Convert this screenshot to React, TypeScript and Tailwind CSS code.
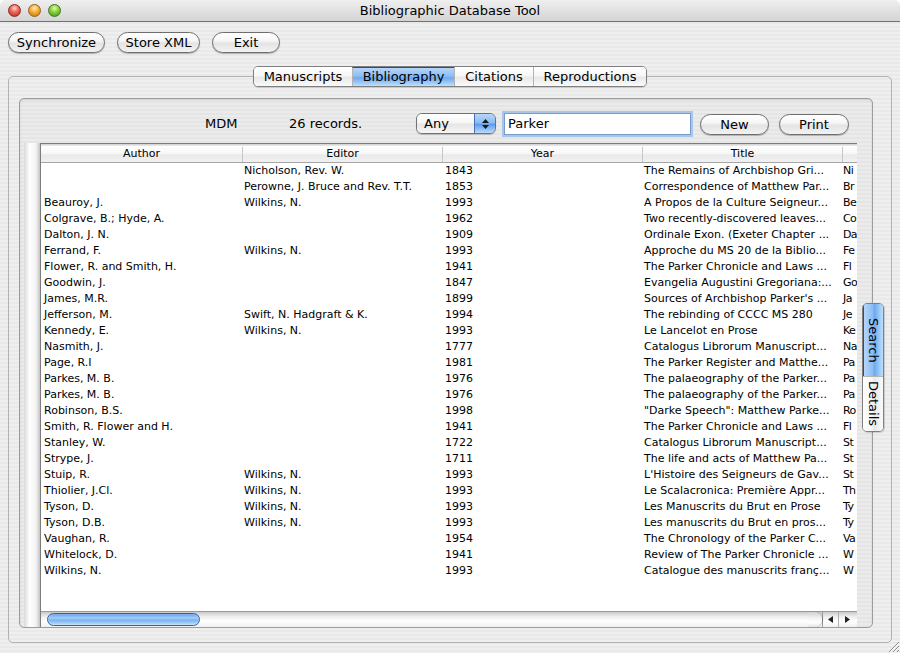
import React from "react";

type Row = {
  author: string;
  editor: string;
  year: string;
  title: string;
  cite: string;
};

// last column is only partly visible in the window, so keep just its first letters
const rows: Row[] = [
  { author: "", editor: "Nicholson, Rev. W.", year: "1843", title: "The Remains of Archbishop Gri...", cite: "Ni" },
  { author: "", editor: "Perowne, J. Bruce and Rev. T.T.", year: "1853", title: "Correspondence of Matthew Par...", cite: "Br" },
  { author: "Beauroy, J.", editor: "Wilkins, N.", year: "1993", title: "A Propos de la Culture Seigneur...", cite: "Be" },
  { author: "Colgrave, B.; Hyde, A.", editor: "", year: "1962", title: "Two recently-discovered leaves...", cite: "Co" },
  { author: "Dalton, J. N.", editor: "", year: "1909", title: "Ordinale Exon. (Exeter Chapter ...", cite: "Da" },
  { author: "Ferrand, F.", editor: "Wilkins, N.", year: "1993", title: "Approche du MS 20 de la Biblio...", cite: "Fe" },
  { author: "Flower, R. and Smith, H.", editor: "", year: "1941", title: "The Parker Chronicle and Laws ...", cite: "Fl" },
  { author: "Goodwin, J.", editor: "", year: "1847", title: "Evangelia Augustini Gregoriana:...", cite: "Go" },
  { author: "James, M.R.", editor: "", year: "1899", title: "Sources of Archbishop Parker's ...", cite: "Ja" },
  { author: "Jefferson, M.", editor: "Swift, N. Hadgraft & K.", year: "1994", title: "The rebinding of CCCC MS 280", cite: "Je" },
  { author: "Kennedy, E.", editor: "Wilkins, N.", year: "1993", title: "Le Lancelot en Prose", cite: "Ke" },
  { author: "Nasmith, J.", editor: "", year: "1777", title: "Catalogus Librorum Manuscript...", cite: "Na" },
  { author: "Page, R.I", editor: "", year: "1981", title: "The Parker Register and Matthe...", cite: "Pa" },
  { author: "Parkes, M. B.", editor: "", year: "1976", title: "The palaeography of the Parker...", cite: "Pa" },
  { author: "Parkes, M. B.", editor: "", year: "1976", title: "The palaeography of the Parker...", cite: "Pa" },
  { author: "Robinson, B.S.", editor: "", year: "1998", title: "\"Darke Speech\": Matthew Parke...", cite: "Ro" },
  { author: "Smith, R. Flower and H.", editor: "", year: "1941", title: "The Parker Chronicle and Laws ...", cite: "Fl" },
  { author: "Stanley, W.", editor: "", year: "1722", title: "Catalogus Librorum Manuscript...", cite: "St" },
  { author: "Strype, J.", editor: "", year: "1711", title: "The life and acts of Matthew Pa...", cite: "St" },
  { author: "Stuip, R.", editor: "Wilkins, N.", year: "1993", title: "L'Histoire des Seigneurs de Gav...", cite: "St" },
  { author: "Thiolier, J.Cl.", editor: "Wilkins, N.", year: "1993", title: "Le Scalacronica: Première Appr...", cite: "Th" },
  { author: "Tyson, D.", editor: "Wilkins, N.", year: "1993", title: "Les Manuscrits du Brut en Prose", cite: "Ty" },
  { author: "Tyson, D.B.", editor: "Wilkins, N.", year: "1993", title: "Les manuscrits du Brut en pros...", cite: "Ty" },
  { author: "Vaughan, R.", editor: "", year: "1954", title: "The Chronology of the Parker C...", cite: "Va" },
  { author: "Whitelock, D.", editor: "", year: "1941", title: "Review of The Parker Chronicle ...", cite: "W" },
  { author: "Wilkins, N.", editor: "", year: "1993", title: "Catalogue des manuscrits franç...", cite: "W" },
];

function AquaButton({ label, w }: { label: string; w: string }) {
  return (
    <button
      className={`${w} h-[21px] shrink-0 rounded-full border border-[#6e6e6e] bg-[linear-gradient(to_bottom,#ffffff_0%,#f6f6f6_40%,#e4e4e4_55%,#f2f2f2_100%)] shadow-[0_1px_1px_rgba(0,0,0,0.25)] text-[13px] leading-none text-black`}>
      {label}
    </button>
  );
}

function TopTabs() {
  const tabs = [
    { label: "Manuscripts", w: "w-[98px]" },
    { label: "Bibliography", w: "w-[102px]", active: true },
    { label: "Citations", w: "w-[79px]" },
    { label: "Reproductions", w: "w-[113px]" },
  ];
  return (
    <div className="flex justify-center -mt-[11px]">
      <div className="flex h-[21px] rounded-[5px] border border-[#7f7f7f] overflow-hidden shadow-[0_1px_1px_rgba(0,0,0,0.15)]">
        {tabs.map((t, i) => (
          <div
            key={t.label}
            className={`${t.w} flex items-center justify-center text-[13px] text-black ${
              i > 0 ? "border-l border-[#b4b4b4]" : ""
            } ${
              t.active
                ? "border-t border-t-[#2a4c8e] bg-[linear-gradient(to_bottom,#b5d6fb_0%,#8dbdf4_45%,#6da9ef_55%,#bfe0fc_100%)]"
                : "bg-[linear-gradient(to_bottom,#ffffff_0%,#f7f7f7_45%,#e8e8e8_55%,#fafafa_100%)]"
            }`}>
            {t.label}
          </div>
        ))}
      </div>
    </div>
  );
}

function SideTabs() {
  return (
    <div className="absolute right-[-12px] top-[204px] flex w-[22px] flex-col rounded-[5px] border border-[#7f7f7f] overflow-hidden shadow-[1px_1px_1px_rgba(0,0,0,0.15)]">
      <div className="h-[72px] flex items-center justify-center border-l border-l-[#2a4c8e] bg-[linear-gradient(to_right,#b5d6fb_0%,#8dbdf4_45%,#6da9ef_55%,#bfe0fc_100%)]">
        <span className="[writing-mode:vertical-rl] text-[13px] text-black">Search</span>
      </div>
      <div className="h-[55px] flex items-center justify-center border-t border-[#b4b4b4] bg-[linear-gradient(to_right,#ffffff_0%,#f7f7f7_45%,#e8e8e8_55%,#fafafa_100%)]">
        <span className="[writing-mode:vertical-rl] text-[13px] text-black">Details</span>
      </div>
    </div>
  );
}

function SearchBar() {
  return (
    <div className="mt-[13px] flex h-[23px] items-center pl-[185px] text-[13px] text-black">
      <span className="w-[84px] shrink-0">MDM</span>
      <span className="w-[127px] shrink-0">26 records.</span>
      <div className="flex h-[21px] w-[80px] shrink-0 rounded-[6px] border border-[#727272] overflow-hidden shadow-[0_1px_1px_rgba(0,0,0,0.2)]">
        <div className="flex flex-1 items-center pl-[7px] bg-[linear-gradient(to_bottom,#ffffff_0%,#f6f6f6_45%,#e6e6e6_55%,#f6f6f6_100%)]">
          Any
        </div>
        <div className="flex w-[21px] flex-col items-center justify-center gap-[2px] border-l border-[#4a70b0] bg-[linear-gradient(to_bottom,#b5d6fb_0%,#8dbdf4_45%,#5f9deb_55%,#b9dcfc_100%)]">
          <svg width="7" height="4" viewBox="0 0 7 4">
            <path d="M0 4 L3.5 0 L7 4 Z" fill="#1a1a1a" />
          </svg>
          <svg width="7" height="4" viewBox="0 0 7 4">
            <path d="M0 0 L3.5 4 L7 0 Z" fill="#1a1a1a" />
          </svg>
        </div>
      </div>
      <div className="ml-[8px] flex h-[22px] w-[187px] shrink-0 items-center border border-[#7a9cc8] bg-white pl-[3px] shadow-[0_0_0_2px_#a9c6ea]">
        Parker
      </div>
      <div className="ml-[9px] mt-[2px]">
        <AquaButton label="New" w="w-[69px]" />
      </div>
      <div className="ml-[10px] mt-[2px]">
        <AquaButton label="Print" w="w-[70px]" />
      </div>
    </div>
  );
}

function HScrollBar() {
  return (
    <div className="flex h-[16px] shrink-0 border-t border-[#9a9a9a] bg-[linear-gradient(to_bottom,#c9c9c9_0%,#ededed_30%,#ffffff_60%,#f0f0f0_100%)]">
      <div className="relative flex-1">
        <div className="absolute left-[6px] top-[1px] h-[13px] w-[153px] rounded-full border border-[#3c5f9c] bg-[linear-gradient(to_bottom,#5d9ae6_0%,#a6cdf7_35%,#7cb3f0_55%,#b8dcfc_100%)] shadow-[inset_0_0_2px_rgba(255,255,255,0.6)]" />
        <div className="absolute right-0 top-0 h-[15px] w-[14px] rounded-r-full bg-[linear-gradient(to_bottom,#d0d0d0_0%,#f2f2f2_40%,#ffffff_70%,#e4e4e4_100%)] shadow-[1px_0_1px_rgba(0,0,0,0.25)]" />
      </div>
      <div className="flex w-[16px] items-center justify-center border-l border-[#9a9a9a]">
        <svg width="5" height="7" viewBox="0 0 5 7">
          <path d="M5 0 L0 3.5 L5 7 Z" fill="#222" />
        </svg>
      </div>
      <div className="flex w-[17px] items-center justify-center border-l border-[#b0b0b0] mr-[2px]">
        <svg width="5" height="7" viewBox="0 0 5 7">
          <path d="M0 0 L5 3.5 L0 7 Z" fill="#222" />
        </svg>
      </div>
    </div>
  );
}

function Table() {
  const headCell = "flex items-center justify-center border-r border-[#c6c6c6] shrink-0";
  return (
    <div className="flex w-[817px] shrink-0 flex-col border-l border-t border-[#7c7c7c] bg-white">
      <div className="h-[2px] shrink-0 bg-[linear-gradient(to_bottom,#cfcfcf,#ececec)]" />
      <div className="flex h-[17px] shrink-0 border-b border-[#a6a6a6] bg-[linear-gradient(to_bottom,#ffffff_0%,#f6f6f6_50%,#e9e9e9_55%,#f1f1f1_100%)] pt-[1px] text-[11px] text-black">
        <div className={`${headCell} w-[202px]`}>Author</div>
        <div className={`${headCell} w-[200px]`}>Editor</div>
        <div className={`${headCell} w-[200px]`}>Year</div>
        <div className={`${headCell} w-[200px]`}>Title</div>
        <div className="flex-1" />
      </div>
      <div className="flex-1 overflow-hidden text-[11px] text-black">
        {rows.map((r, i) => (
          <div key={i} className="flex h-[16px] items-center whitespace-nowrap">
            <div className="w-[202px] shrink-0 overflow-hidden pl-[3px]">{r.author}</div>
            <div className="w-[200px] shrink-0 overflow-hidden pl-[1px]">{r.editor}</div>
            <div className="w-[200px] shrink-0 overflow-hidden pl-[2px]">{r.year}</div>
            <div className="w-[200px] shrink-0 overflow-hidden pl-[1px]">{r.title}</div>
            <div className="flex-1 tracking-[-0.6px]">{r.cite}</div>
          </div>
        ))}
      </div>
      <HScrollBar />
    </div>
  );
}

export default function App() {
  return (
    <div className="relative flex h-[653px] w-[900px] flex-col overflow-hidden bg-white font-['DejaVu_Sans',sans-serif]">
      <div className="flex h-full flex-col rounded-t-[6px] bg-[image:repeating-linear-gradient(to_bottom,#efefef_0px,#efefef_2px,#e9e9e9_2px,#e9e9e9_4px)]">
        {/* title bar */}
        <div className="relative flex h-[22px] shrink-0 items-center justify-center rounded-t-[6px] border-b border-[#707070] bg-[linear-gradient(to_bottom,#efefef,#d4d4d4)]">
          <div className="absolute left-[8px] top-[4px] flex gap-[7px]">
            <div className="h-[13px] w-[13px] rounded-full border border-[#8c2a22] bg-[radial-gradient(circle_at_50%_30%,#ffd6cc_0%,#f06a5e_40%,#b8241a_100%)]" />
            <div className="h-[13px] w-[13px] rounded-full border border-[#94601a] bg-[radial-gradient(circle_at_50%_30%,#fff0b8_0%,#f8b23a_40%,#c2700e_100%)]" />
            <div className="h-[13px] w-[13px] rounded-full border border-[#3c7a1a] bg-[radial-gradient(circle_at_50%_30%,#e2f8b8_0%,#8ed43e_40%,#3f8e14_100%)]" />
          </div>
          <span className="text-[13px] text-black">Bibliographic Database Tool</span>
        </div>

        {/* toolbar */}
        <div className="flex gap-[12px] pl-[8px] pt-[10px]">
          <AquaButton label="Synchronize" w="w-[97px]" />
          <AquaButton label="Store XML" w="w-[83px]" />
          <AquaButton label="Exit" w="w-[68px]" />
        </div>

        {/* outer tab view */}
        <div className="ml-[8px] mt-[23px] h-[567px] w-[884px] rounded-[5px] border border-[#b2b2b2]">
          <TopTabs />
          <div className="relative ml-[10px] mt-[11px] flex h-[530px] w-[854px] flex-col rounded-[5px] border border-[#9c9c9c] bg-[image:repeating-linear-gradient(to_bottom,#ebebeb_0px,#ebebeb_2px,#e5e5e5_2px,#e5e5e5_4px)] shadow-[inset_0_1px_2px_rgba(0,0,0,0.12)]">
            <SearchBar />
            <div className="mt-[8px] flex flex-1 min-h-0">
              <div className="ml-[4px] w-[16px] shrink-0 bg-[linear-gradient(to_right,#d9d9d9,#ffffff_35%,#f3f3f3_75%,#c4c4c4)]" />
              <Table />
            </div>
            <SideTabs />
          </div>
        </div>
      </div>

      {/* resize grip */}
      <svg className="absolute bottom-0 right-0" width="14" height="14" viewBox="0 0 14 14">
        <path d="M13 3 L3 13 M13 7 L7 13 M13 11 L11 13" stroke="#8a8a8a" strokeWidth="1" />
        <path d="M13 4 L4 13 M13 8 L8 13" stroke="#ffffff" strokeWidth="1" />
      </svg>
    </div>
  );
}
